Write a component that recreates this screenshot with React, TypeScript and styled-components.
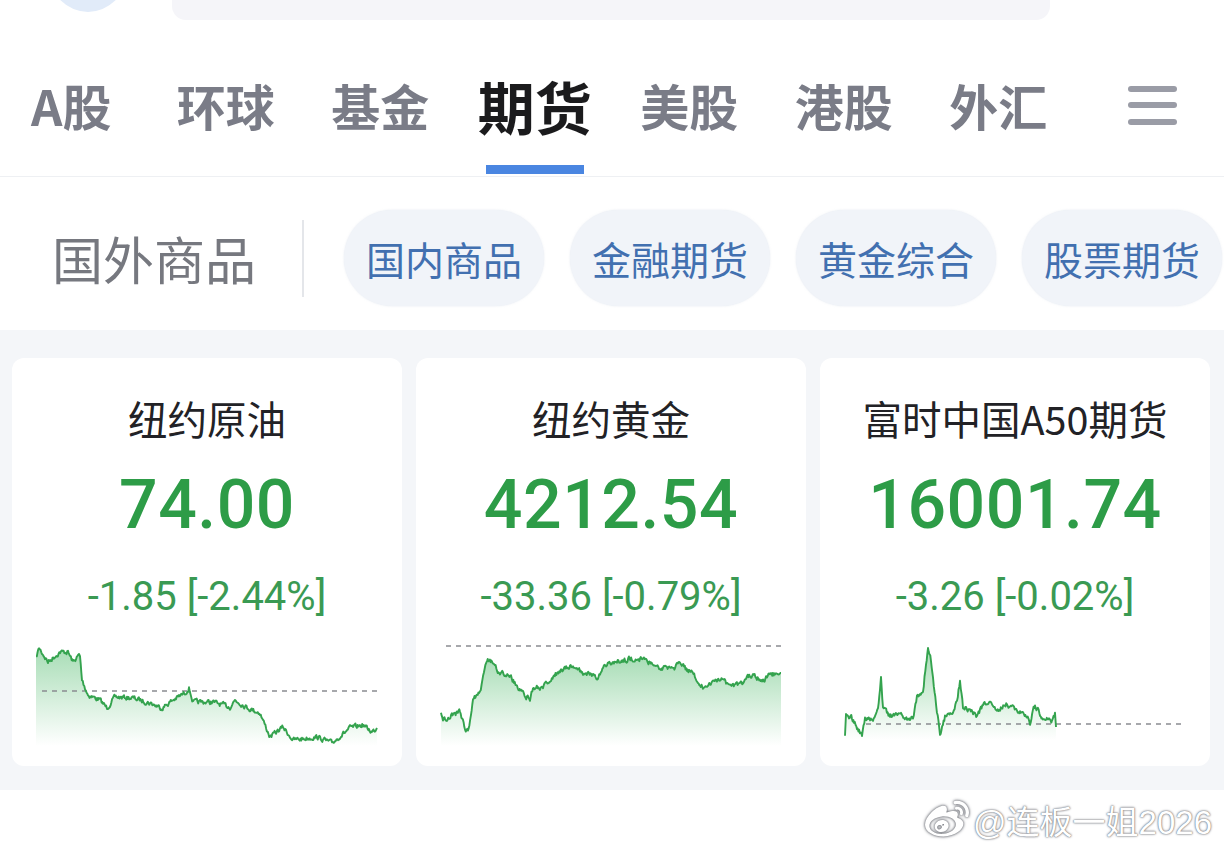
import React from 'react';
import styled, { createGlobalStyle } from 'styled-components';
import { FaWeibo } from 'react-icons/fa';

const GlobalStyle = createGlobalStyle`
  html, body {
    margin: 0;
    padding: 0;
    background: #ffffff;
  }
  body {
    width: 1224px;
    height: 850px;
    overflow: hidden;
    font-family: "Noto Sans CJK SC", "Noto Sans", sans-serif;
  }
`;

type Pt = [number, number];

// small seeded generator so the chart noise is stable between renders
function seeded(seed: number) {
  let s = seed;
  return () => {
    s = (s * 16807) % 2147483647;
    return (s - 1) / 2147483646;
  };
}

function buildSeries(anchors: Pt[], ox: number, oy: number, seed: number, amp: number): Pt[] {
  const rand = seeded(seed);
  const pts: Pt[] = [];
  let drift = 0;
  for (let i = 0; i < anchors.length - 1; i++) {
    const [x0, y0] = anchors[i];
    const [x1, y1] = anchors[i + 1];
    const steps = Math.max(1, Math.round((x1 - x0) / 0.75));
    for (let k = 0; k < steps; k++) {
      const t = k / steps;
      drift = drift * 0.45 + (rand() - 0.5) * amp;
      pts.push([x0 + (x1 - x0) * t - ox, y0 + (y1 - y0) * t - oy + drift]);
    }
  }
  const last = anchors[anchors.length - 1];
  pts.push([last[0] - ox, last[1] - oy]);
  return pts;
}

const oilAnchors: Pt[] = [
  [36, 658], [39, 648], [48, 662], [60, 652], [68, 652], [73, 662], [79, 655], [80, 657],
  [82, 680], [88, 695], [100, 700], [107, 708], [115, 697], [133, 698], [150, 703],
  [162, 708], [173, 700], [185, 693], [189, 688], [193, 702], [213, 702], [230, 707],
  [235, 700], [248, 708], [260, 713], [270, 737], [283, 727], [293, 740], [317, 737],
  [332, 743], [350, 728], [363, 725], [372, 732], [377, 728],
];

const goldAnchors: Pt[] = [
  [441, 715], [443, 720], [460, 712], [465, 727], [468, 732], [473, 700], [480, 693],
  [487, 660], [492, 663], [500, 673], [508, 673], [520, 690], [530, 700], [533, 688],
  [543, 687], [557, 673], [573, 665], [583, 673], [597, 677], [607, 663], [623, 660],
  [637, 658], [650, 663], [663, 668], [673, 670], [678, 663], [687, 670], [692, 673],
  [703, 687], [710, 683], [723, 680], [730, 687], [743, 683], [750, 675], [763, 680],
  [770, 675], [781, 673],
];

const a50Anchors: Pt[] = [
  [845, 738], [846, 717], [852, 718], [857, 728], [862, 735], [865, 718], [873, 720],
  [878, 710], [880, 690], [881, 677], [883, 707], [890, 717], [898, 713], [907, 718],
  [913, 717], [917, 697], [923, 690], [926, 665], [928, 650], [931, 660], [933, 680],
  [940, 735], [945, 717], [953, 713], [957, 700], [960, 680], [963, 707], [970, 710],
  [977, 717], [983, 705], [990, 702], [997, 710], [1007, 703], [1017, 712], [1023, 710],
  [1030, 723], [1035, 705], [1043, 718], [1052, 722], [1055, 715], [1056, 727],
];

interface Quote {
  name: string;
  price: string;
  change: string;
  series: Pt[];
  baseY: number;
  baseFrom: number;
  fillBottom: number;
}

const quotes: Quote[] = [
  {
    name: '纽约原油',
    price: '74.00',
    change: '-1.85 [-2.44%]',
    series: buildSeries(oilAnchors, 36, 640, 7, 4.2),
    baseY: 51,
    baseFrom: 6,
    fillBottom: 106,
  },
  {
    name: '纽约黄金',
    price: '4212.54',
    change: '-33.36 [-0.79%]',
    series: buildSeries(goldAnchors, 440, 640, 19, 4.4),
    baseY: 6,
    baseFrom: 6,
    fillBottom: 106,
  },
  {
    name: '富时中国A50期货',
    price: '16001.74',
    change: '-3.26 [-0.02%]',
    series: buildSeries(a50Anchors, 844, 640, 31, 4.6),
    baseY: 84,
    baseFrom: 22,
    fillBottom: 100,
  },
];

const tabs = ['A股', '环球', '基金', '期货', '美股', '港股', '外汇'];
const chips = ['国内商品', '金融期货', '黄金综合', '股票期货'];

function Sparkline({ quote, id }: { quote: Quote; id: string }) {
  const line = quote.series.map(([x, y]) => `${x.toFixed(1)},${y.toFixed(1)}`).join(' ');
  const first = quote.series[0];
  const last = quote.series[quote.series.length - 1];
  const area = `${line} ${last[0].toFixed(1)},${quote.fillBottom} ${first[0].toFixed(1)},${quote.fillBottom}`;
  return (
    <ChartSvg viewBox="0 0 342 110" width={342} height={110}>
      <defs>
        <linearGradient id={id} x1="0" y1="0" x2="0" y2="1">
          <stop offset="0%" stopColor="#3db35c" stopOpacity={0.45} />
          <stop offset="100%" stopColor="#3db35c" stopOpacity={0} />
        </linearGradient>
      </defs>
      <polygon points={area} fill={`url(#${id})`} />
      <line
        x1={quote.baseFrom}
        x2={341}
        y1={quote.baseY}
        y2={quote.baseY}
        stroke="#8a8c91"
        strokeWidth={1.3}
        strokeDasharray="5 5"
      />
      <polyline points={line} fill="none" stroke="#34a34e" strokeWidth={1.9} strokeLinejoin="round" />
    </ChartSvg>
  );
}

function App() {
  return (
    <Page>
      <GlobalStyle />
      <TopStrip>
        <Avatar />
        <SearchBar />
      </TopStrip>

      <TabBar>
        {tabs.map((t) => (
          <Tab key={t} $active={t === '期货'}>
            {t}
          </Tab>
        ))}
        <MenuButton>
          <span />
          <span />
          <span />
        </MenuButton>
      </TabBar>

      <SubBar>
        <SubCurrent>国外商品</SubCurrent>
        <SubDivider />
        <ChipRow>
          {chips.map((c) => (
            <Chip key={c}>{c}</Chip>
          ))}
        </ChipRow>
      </SubBar>

      <CardsArea>
        {quotes.map((q, i) => (
          <Card key={q.name}>
            <CardTitle>{q.name}</CardTitle>
            <Price>{q.price}</Price>
            <Change>{q.change}</Change>
            <Sparkline quote={q} id={`fill-${i}`} />
          </Card>
        ))}
      </CardsArea>

      <Footer>
        <Watermark>
          <FaWeibo size={44} />
          <span>@连板一姐2026</span>
        </Watermark>
      </Footer>
    </Page>
  );
}

export default App;

const Page = styled.div`
  width: 1224px;
  height: 850px;
  display: flex;
  flex-direction: column;
  background: #ffffff;
  overflow: hidden;
`;

const TopStrip = styled.div`
  height: 20px;
  display: flex;
  align-items: flex-end;
  overflow: hidden;
  padding-left: 50px;
`;

const Avatar = styled.div`
  flex: 0 0 76px;
  height: 76px;
  border-radius: 50%;
  background: #e1ebf9;
  margin-bottom: 8px;
`;

const SearchBar = styled.div`
  margin-left: 46px;
  width: 878px;
  height: 60px;
  border-radius: 14px;
  background: #f5f5f9;
`;

const TabBar = styled.div`
  display: grid;
  grid-template-columns: repeat(8, 1fr);
  align-items: center;
  margin: 0 -6px;
  height: 142px;
  padding-top: 14px;
  border-bottom: 1px solid #eef0f3;
`;

const Tab = styled.div<{ $active?: boolean }>`
  position: relative;
  justify-self: center;
  line-height: 60px;
  font-size: ${(p) => (p.$active ? '57px' : '49px')};
  font-weight: 700;
  color: ${(p) => (p.$active ? '#1b1b1d' : '#7a7c87')};
  white-space: nowrap;

  &::after {
    content: '';
    display: ${(p) => (p.$active ? 'block' : 'none')};
    position: absolute;
    left: 50%;
    top: 90px;
    width: 98px;
    height: 9px;
    margin-left: -49px;
    background: #4a86e1;
  }
`;

const MenuButton = styled.div`
  justify-self: center;
  display: flex;
  flex-direction: column;
  gap: 10.5px;
  width: 49px;

  span {
    display: block;
    height: 6px;
    border-radius: 3px;
    background: #9a9ca6;
  }
`;

const SubBar = styled.div`
  display: flex;
  align-items: center;
  padding: 33px 0 24px 52px;
  overflow: hidden;
  white-space: nowrap;
`;

const SubCurrent = styled.div`
  font-size: 51px;
  line-height: 60px;
  color: #76787f;
  flex: 0 0 auto;
`;

const SubDivider = styled.div`
  flex: 0 0 2px;
  height: 77px;
  background: #e4e6ea;
  margin: 0 40px 0 46px;
`;

const ChipRow = styled.div`
  display: flex;
  gap: 26px;
`;

const Chip = styled.div`
  flex: 0 0 200px;
  height: 96px;
  border-radius: 48px;
  background: #f1f4f9;
  box-shadow: 0 0 2px rgba(200, 210, 225, 0.5);
  display: flex;
  align-items: center;
  justify-content: center;
  font-size: 39px;
  color: #4270b0;
`;

const CardsArea = styled.div`
  display: grid;
  grid-template-columns: repeat(3, 1fr);
  gap: 14px;
  padding: 28px 14px 24px 12px;
  background: #f4f6f9;
`;

const Card = styled.div`
  background: #ffffff;
  border-radius: 12px;
  height: 408px;
  box-sizing: border-box;
  padding-top: 38px;
  display: flex;
  flex-direction: column;
  align-items: center;
`;

const CardTitle = styled.div`
  font-size: 39.5px;
  line-height: 44px;
  color: #222226;
  white-space: nowrap;
`;

const Price = styled.div`
  margin-top: 25px;
  font-family: Roboto, "Noto Sans", sans-serif;
  font-size: 68px;
  line-height: 80px;
  font-weight: 500;
  color: #2d9c47;
  letter-spacing: 0.5px;
`;

const Change = styled.div`
  margin-top: 30px;
  font-family: Roboto, "Noto Sans", sans-serif;
  font-size: 40px;
  line-height: 44px;
  color: #3a9a53;
  white-space: pre;
`;

const ChartSvg = styled.svg`
  display: block;
  margin-top: 21px;
`;

const Footer = styled.div`
  flex: 1;
  display: flex;
  align-items: center;
  justify-content: flex-end;
  padding-right: 12px;
`;

const Watermark = styled.div`
  display: flex;
  align-items: center;
  gap: 4px;
  color: #ffffff;
  font-family: "Liberation Sans", "Noto Sans CJK SC", sans-serif;
  font-size: 33px;
  text-shadow: 0 0 1px #6d6f75, 0 0 2px #8a8c92, 0 0 3px #b0b2b8;

  svg {
    filter: drop-shadow(0 0 1px #6d6f75) drop-shadow(0 0 1.5px #9a9ca2);
  }
`;
